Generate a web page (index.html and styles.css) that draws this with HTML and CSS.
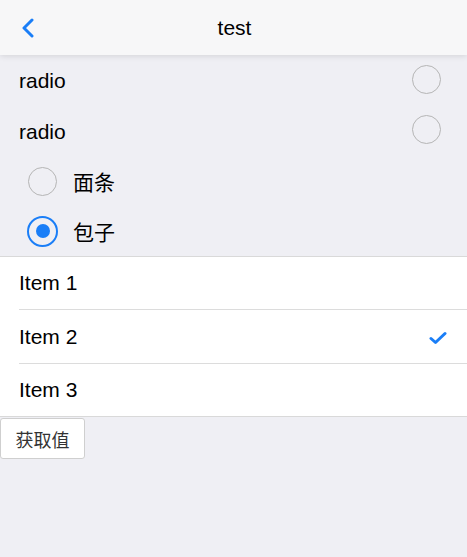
FILE: index.html
```html
<!DOCTYPE html>
<html>
<head>
<meta charset="utf-8">
<link rel="stylesheet" href="styles.css">
</head>
<body>
<header class="nav">
  <span class="back">
    <svg width="14" height="20" viewBox="0 0 14 20"><path d="M11 2 L3 10 L11 18" fill="none" stroke="#1a7ef7" stroke-width="3" stroke-linecap="round" stroke-linejoin="round"/></svg>
  </span>
  <span class="title">test</span>
</header>
<div class="radios">
  <div class="rrow first"><span class="label">radio</span><span class="circle"></span></div>
  <div class="rrow"><span class="label">radio</span><span class="circle"></span></div>
  <div class="lrow"><span class="circle"></span><span class="label">面条</span></div>
  <div class="lrow"><span class="circle on"></span><span class="label">包子</span></div>
</div>
<ul class="list">
  <li class="item"><span>Item 1</span></li>
  <li class="item mid"><span>Item 2</span>
    <svg class="check" width="18" height="14" viewBox="0 0 18 14"><path d="M2 7.5 L6.5 11.5 L16 2.5" fill="none" stroke="#1a7ef7" stroke-width="3" stroke-linecap="round" stroke-linejoin="round"/></svg>
  </li>
  <li class="item"><span>Item 3</span></li>
</ul>
<button class="btn">获取值</button>
</body>
</html>
```
FILE: styles.css
```css
html, body {
  margin: 0;
  padding: 0;
  background: #efeff4;
  font-family: "Liberation Sans", Arial, "Noto Sans CJK SC", sans-serif;
  color: #000;
}
.nav {
  position: relative;
  height: 55px;
  background: #f7f7f8;
  box-shadow: 0 1px 6px rgba(0, 0, 0, 0.12);
  display: flex;
  align-items: center;
  justify-content: center;
}
.back {
  position: absolute;
  left: 21px;
  top: 18px;
  display: flex;
}
.title {
  font-size: 21px;
  line-height: 1;
  margin-left: 2px;
  margin-top: -1px;
}
.radios {
  display: flex;
  flex-direction: column;
}
.rrow {
  height: 50px;
  display: flex;
  align-items: center;
  justify-content: space-between;
  padding: 0 26px 0 19px;
}
.rrow.first {
  height: 51px;
}
.rrow .label {
  font-size: 21px;
  margin-top: 1px;
}
.rrow .circle {
  margin-bottom: 3px;
}
.lrow {
  height: 50px;
  display: flex;
  align-items: center;
  padding-left: 28px;
  gap: 16px;
}
.lrow .label {
  font-size: 21px;
}
.circle {
  box-sizing: border-box;
  width: 29px;
  height: 29px;
  border: 1.5px solid #b5b5b5;
  border-radius: 50%;
  display: flex;
  align-items: center;
  justify-content: center;
}
.circle.on {
  width: 31px;
  height: 31px;
  margin-left: -1px;
  margin-right: -1px;
  border: 2.5px solid #1a7ef7;
}
.circle.on::after {
  content: "";
  width: 14px;
  height: 14px;
  border-radius: 50%;
  background: #1a7ef7;
}
.list {
  list-style: none;
  margin: 0;
  padding: 0 0 0 19px;
  background: #fff;
  border-top: 1px solid #d9d9d9;
  border-bottom: 1px solid #d9d9d9;
}
.item {
  box-sizing: border-box;
  height: 53px;
  display: flex;
  align-items: center;
  justify-content: space-between;
  padding-right: 20px;
  font-size: 21px;
  border-bottom: 1px solid #dcdcdc;
}
.item.mid {
  height: 54px;
}
.item:last-child {
  border-bottom: none;
  height: 52px;
}
.check {
  margin-top: 2px;
}
.btn {
  margin: 1px 0 0 0;
  height: 41px;
  width: 85px;
  padding: 0;
  background: #fff;
  border: 1px solid #cfcfcf;
  border-radius: 3px;
  font-family: "Liberation Sans", Arial, "Noto Sans CJK SC", sans-serif;
  font-size: 18px;
  color: #333;
}
```
